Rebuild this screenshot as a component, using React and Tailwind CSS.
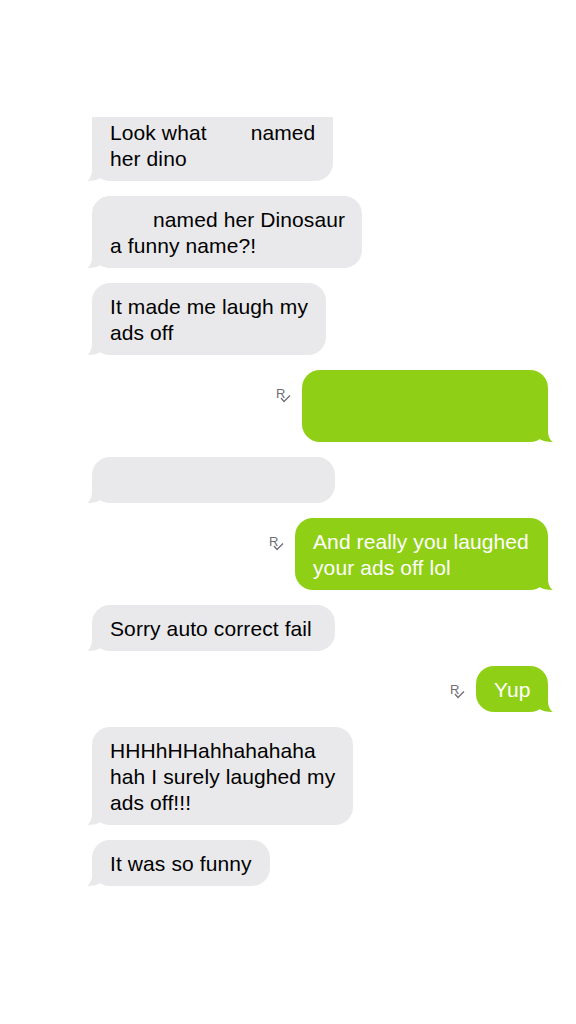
import React from 'react'

const GRAY = 'bg-[#e9e9eb]'
const GREEN = 'bg-[#8fd016]'

function TailLeft() {
  return (
    <svg className="absolute left-[-5px] bottom-[-1px]" width="22" height="22" viewBox="0 0 22 22">
      <path d="M5 0 L5 10 C5 15 3 19 0 21 C6 21 11 20 15 17 L22 17 L22 0 Z" fill="#e9e9eb" />
    </svg>
  )
}

function TailRight() {
  return (
    <svg className="absolute right-[-5px] bottom-[-1px]" width="22" height="22" viewBox="0 0 22 22">
      <path d="M17 0 L17 10 C17 15 19 19 22 21 C16 21 11 20 7 17 L0 17 L0 0 Z" fill="#8fd016" />
    </svg>
  )
}

function Receipt() {
  return (
    <div className="relative w-[15px] h-[14px] mt-[18px] text-[#6e6e73]">
      <span className="absolute left-0 top-[-1px] text-[13px] leading-none" style={{ fontFamily: '"Liberation Sans", sans-serif' }}>R</span>
      <svg className="absolute left-[4px] top-[7px]" width="11" height="8" viewBox="0 0 11 8">
        <path d="M1 3 L4 6.5 L10 0.5" fill="none" stroke="currentColor" strokeWidth="1.3" />
      </svg>
    </div>
  )
}

function Them({ w, children, clip }) {
  return (
    <div className="flex pl-[92px]">
      <div className={`relative ${GRAY} rounded-[18px] ${clip ? 'rounded-t-none' : ''} px-[18px] pt-[11px] pb-[9px] text-black whitespace-nowrap`} style={{ width: w }}>
        {children}
        <TailLeft />
      </div>
    </div>
  )
}

function Me({ w, children, min }) {
  return (
    <div className="flex justify-end pr-[28px] gap-[11px]">
      <Receipt />
      <div className={`relative ${GREEN} rounded-[18px] px-[18px] pt-[11px] pb-[9px] text-white whitespace-nowrap ${min ? 'min-h-[72px]' : ''}`} style={{ width: w }}>
        {children}
        <TailRight />
      </div>
    </div>
  )
}

const Blank = ({ w }) => <span className="inline-block" style={{ width: w }} />

export default function App() {
  return (
    <div className="w-[576px] h-[1024px] bg-white overflow-hidden text-[21px] leading-[26px] tracking-[0.1px]" style={{ fontFamily: '"Liberation Sans", Arial, sans-serif' }}>
      <div className="h-[117px]" />
      <div className="overflow-hidden h-[907px]">
        <div className="flex flex-col gap-[15px] -mt-[8px]">
          <Them w={241} clip>
            Look what<Blank w={44} />named<br />her dino
          </Them>
          <Them w={270}>
            <Blank w={43} />named her Dinosaur<br />a funny name?!
          </Them>
          <Them w={234}>
            It made me laugh my<br />ads off
          </Them>
          <Me w={246} min>
            &nbsp;
          </Me>
          <Them w={243}>&nbsp;</Them>
          <Me w={253}>
            And really you laughed<br />your ads off lol
          </Me>
          <Them w={243}>Sorry auto correct fail</Them>
          <Me w={72}>Yup</Me>
          <Them w={261}>
            HHHhHHahhahahaha<br />hah I surely laughed my<br />ads off!!!
          </Them>
          <Them w={178}>It was so funny</Them>
        </div>
      </div>
    </div>
  )
}
